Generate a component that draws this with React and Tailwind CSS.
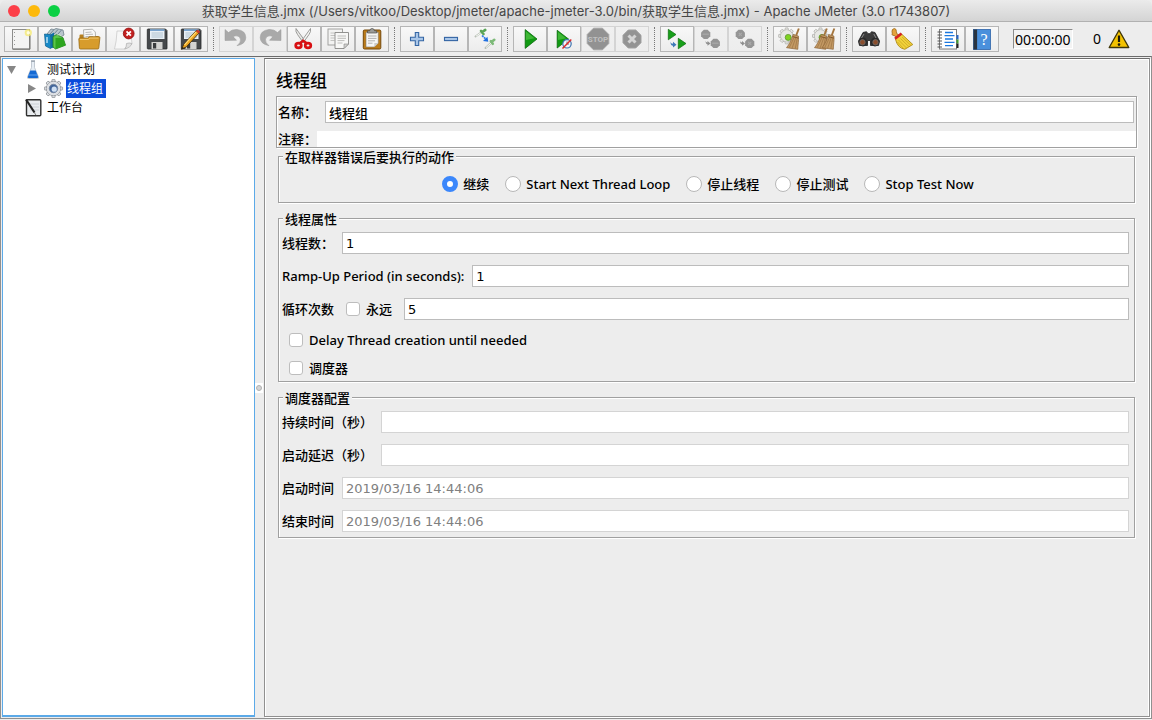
import React from "react";

const Poly = ({ cx, cy, r, fill, stroke = "none" }) => {
  const k = r * 0.414;
  const pts = [
    [cx - k, cy - r], [cx + k, cy - r], [cx + r, cy - k], [cx + r, cy + k],
    [cx + k, cy + r], [cx - k, cy + r], [cx - r, cy + k], [cx - r, cy - k],
  ];
  return <polygon points={pts.map((p) => p.join(",")).join(" ")} fill={fill} stroke={stroke} />;
};

const Floppy = () => (
  <g>
    <path d="M8 3h17.500l1.500 1.500V22.500q0 .5-.5.5H8q-.7 0-.7-.7V3.700Q7.300 3 8 3z" fill="#45484b" stroke="#26282a" strokeWidth=".8" />
    <rect x="10" y="3.400" width="14.500" height="9.600" fill="#e9f0f6" />
    <rect x="10" y="3.400" width="14.500" height="1.400" fill="#5f92c4" />
    <path d="M11.500 7h11.500M11.500 9h11.500M11.500 11h11.500" stroke="#a9bccb" strokeWidth=".9" />
    <rect x="11.500" y="16" width="11" height="7" fill="#d3d3d1" />
    <rect x="13" y="17" width="3.200" height="5.500" fill="#3a3c3e" />
  </g>
);

const Teeth = ({ cx, cy, r, fill, stroke }) => (
  <g fill={fill} stroke={stroke} strokeWidth=".8">
    {[0, 45, 90, 135, 180, 225, 270, 315].map((a) => (
      <path key={a} transform={`rotate(${a} ${cx} ${cy})`} d={`M${cx - 1.9} ${cy - r + 2.6}L${cx - 1.3} ${cy - r}h2.6L${cx + 1.9} ${cy - r + 2.6}z`} />
    ))}
    <circle cx={cx} cy={cy} r={r - 2} />
    <circle cx={cx} cy={cy} r={r - 2.4} stroke="none" />
  </g>
);

const Gear = ({ cx, cy }) => (
  <g>
    <Teeth cx={cx} cy={cy} r={8} fill="#e7e7e4" stroke="#b2b2af" />
    <circle cx={cx + 1.5} cy={cy + 1.5} r="3" fill="#7fd321" stroke="#5e9430" strokeWidth=".8" />
  </g>
);

const Broom = ({ dx = 0 }) => (
  <g transform={`translate(${dx} 0)`}>
    <path d="M25.800 2.500l-2.600 7" stroke="#a5763f" strokeWidth="1.900" />
    <path d="M20.200 8.500l5.200 1.500c.6 4.500-.6 9-.6 13.300l-11.300-1.600c2.800-3.200 5-8.200 6.700-13.200z" fill="#c49a64" stroke="#8b6336" strokeWidth=".7" />
    <path d="M21.300 11l-5 10.500M22.800 11.500l-3.700 10.700M24.300 12l-2 10.500" stroke="#946c3e" strokeWidth=".6" />
    <path d="M19.700 10.600l5.700 1.500" stroke="#7a4f22" strokeWidth=".9" />
  </g>
);

const icons = {
  fresh: (
    <g>
      <rect x="8.500" y="3.500" width="17" height="19.500" fill="#f4f4f3" stroke="#8d8d8b" />
      <path d="M9 23.200h17V9" stroke="#73736f" fill="none" />
      <path d="M10.500 6v14" stroke="#9a9a98" strokeDasharray="1 3" />
      <circle cx="24.300" cy="6.700" r="3.600" fill="#f5e96c" opacity=".75" />
      <circle cx="24.300" cy="6.700" r="1.700" fill="#fffde0" />
    </g>
  ),
  templates: (
    <g>
      <path d="M9 8l4-5 3 .5 2-1 7 1.500 1 5-8 5z" fill="#b9c5cc" stroke="#71818b" strokeWidth=".8" />
      <path d="M12 8l4-4.500M16 8l4-4.500M20 8l3.500-4" stroke="#6f8593" />
      <path d="M6.500 8l6 .6v14l-5-2.600z" fill="#1789c7" stroke="#0d5d8d" strokeWidth=".7" />
      <path d="M12.500 8.600l3.500-2v15l-3.500 1z" fill="#0f6ea6" />
      <path d="M9 11v6" stroke="#c8e7f8" strokeWidth="1.400" />
      <path d="M15 10.500l3.500-1.800 6.500 3 2.500 7.500-10 3.800-2.500-2z" fill="#5cc64b" stroke="#1f7c19" strokeWidth=".8" />
      <path d="M17.500 12l7.500-.3 2.500 7.500-10 3.800z" fill="#2da51f" />
      <path d="M19.500 9.200l2-.8 1.500 2" fill="none" stroke="#c5efbd" />
    </g>
  ),
  open: (
    <g>
      <path d="M7.500 9.500q0-1 1-1H13l1 1.500h12.500V20H7.500z" fill="#b7801f" />
      <path d="M11.500 3.800l9-.6 2.800 2.800.5 8.500H12z" fill="#f8f8f7" stroke="#a3a3a0" strokeWidth=".8" />
      <path d="M13.500 6.500l6-.5M13.500 8.500l7.500-.3M13.500 10.500h7.500" stroke="#b4b4b2" strokeWidth=".9" />
      <path d="M6.800 13q0-1 1-1h8l1.500-1.300H27q1 0 .9 1L26.800 22q-.1 1-1.100 1H8.500q-1 0-1.100-1z" fill="#d79c2c" stroke="#9b6c16" strokeWidth=".8" />
      <path d="M8 13.500h8.500l1.500-1.400h8.500" stroke="#f3cf7c" fill="none" strokeWidth=".8" />
    </g>
  ),
  close: (
    <g>
      <path d="M11 5h13.500l1.500 12.500-7 5.500H8.500q2-7 2.500-18z" fill="#f7f7f7" stroke="#cbcbcb" strokeWidth=".8" />
      <path d="M26 17.500q-3-1-5.500 0 .3 3-1.800 5.500 6-1.600 7.300-5.500z" fill="#e0e0e0" stroke="#acacac" strokeWidth=".7" />
      <circle cx="22.700" cy="7.500" r="5.400" fill="#c2201f" stroke="#8f0e0e" strokeWidth=".8" />
      <path d="M20.500 5.300l4.400 4.400M24.900 5.300l-4.400 4.400" stroke="#fff" strokeWidth="1.800" />
    </g>
  ),
  save: <Floppy />,
  saveAs: (
    <g>
      <Floppy />
      <path d="M22.300 4.500L10 18l-2.700 5.300 5.200-2.500L25 7z" fill="#eda51f" stroke="#4a320a" strokeWidth=".9" />
      <path d="M22 6L10.500 18.800" stroke="#ffdc79" strokeWidth="1.200" />
      <path d="M22.800 4.300l2.600 2.400" stroke="#cc3a28" strokeWidth="2.400" />
      <path d="M7.300 23.500l1.200-2.800 1.600 1.500z" fill="#222" />
    </g>
  ),
  undo: (
    <path d="M6 3.500l3.500 3Q13 3 18 3.500q8.800 1 8.800 8 0 6.500-8.800 8.200 4-3 3.500-6.400-.6-3.600-4.500-3.500-1.600 0-2.500 1.300l3 3.200L6 14.500z" fill="#a9a9a9" stroke="#999" strokeWidth=".5" />
  ),
  redo: (
    <path d="M28 3.500l-3.500 3Q21 3 16 3.500q-8.800 1-8.800 8 0 6.500 8.800 8.200-4-3-3.500-6.400.6-3.600 4.500-3.500 1.600 0 2.500 1.300l-3 3.200L28 14.500z" fill="#a9a9a9" stroke="#999" strokeWidth=".5" />
  ),
  cut: (
    <g>
      <path d="M9 2.500q-.8 3 1.500 6l6 8.500 1.500-2z" fill="#e8e8e6" stroke="#868684" strokeWidth=".8" />
      <path d="M23.500 2.500q.8 3-1.500 6l-6 8.500-1.500-2z" fill="#f4f4f2" stroke="#868684" strokeWidth=".8" />
      <ellipse cx="11.500" cy="19.500" rx="2.800" ry="2.400" fill="none" stroke="#d80f12" strokeWidth="2.700" />
      <ellipse cx="21" cy="19.500" rx="2.800" ry="2.400" fill="none" stroke="#d80f12" strokeWidth="2.700" />
      <path d="M13 17l3.200-2.200 3.200 2.200" fill="none" stroke="#d80f12" strokeWidth="2.400" />
    </g>
  ),
  copy: (
    <g>
      <rect x="7" y="3" width="14.500" height="16" fill="#f3f3f2" stroke="#9a9a98" strokeWidth=".9" />
      <path d="M9.500 7h9M9.500 9.500h6M9.500 12h4M9.500 14.500h4" stroke="#c4c4c2" />
      <path d="M14 6.500h13.500v11.500l-4.500 4.500h-9z" fill="#f8f8f7" stroke="#888886" strokeWidth=".9" />
      <path d="M16.500 10h8.500M16.500 12.300h8.500M16.500 14.600h7M16.500 17h5" stroke="#bcbcba" />
      <path d="M27.500 18h-4.500v4.500z" fill="#d2d2d0" stroke="#888886" strokeWidth=".6" />
    </g>
  ),
  paste: (
    <g>
      <rect x="8.300" y="4" width="17.500" height="19" rx="1.200" fill="#bd7c19" stroke="#74480a" />
      <path d="M11 6.300h12.300v10.700l-4 4H11z" fill="#f6f6f5" stroke="#83786a" strokeWidth=".6" />
      <path d="M13 10h8.500M13 12.400h8.500M13 14.800h7M13 17.200h4.500" stroke="#aaa" strokeWidth=".9" />
      <path d="M23.300 17h-4v4z" fill="#cbcbc9" />
      <path d="M12.500 7V4.800h2.200q.3-2.300 2.400-2.300t2.400 2.300h2.200V7z" fill="#9b9b98" stroke="#4e4e4c" strokeWidth=".7" />
    </g>
  ),
  plus: (
    <path d="M15.300 6.500h3.400v4.800h4.800v3.400h-4.800v4.800h-3.400v-4.800h-4.800v-3.400h4.800z" fill="#a9c6e8" stroke="#3465a4" strokeWidth="1.100" />
  ),
  minus: <rect x="10.500" y="11.400" width="13" height="3.200" fill="#a9c6e8" stroke="#3465a4" strokeWidth="1.100" />,
  toggle: (
    <g>
      <path d="M7.500 10.500l7-5" stroke="#b9c0b6" strokeWidth="2" strokeLinecap="round" />
      <path d="M8 10.200l6.500-4.500" stroke="#f6f9f5" strokeWidth="1" />
      <path d="M13 5l2.500 3M14 6.300L17.300 3.900" stroke="#5aa556" strokeWidth="2.600" strokeLinecap="round" />
      <path d="M17.500 22l6-5.500" stroke="#b9c0b6" strokeWidth="2" strokeLinecap="round" />
      <path d="M18 21.600l5.500-5" stroke="#f6f9f5" strokeWidth="1" />
      <path d="M22.800 15.200l2 2.600M23.500 16l2.800-2.200" stroke="#7dba78" strokeWidth="2.600" strokeLinecap="round" />
      <path d="M14 9.500l3.500 3.300" stroke="#2d7be8" strokeWidth="1.700" strokeDasharray="2 .7" />
      <path d="M20.300 15.700l-5.300-.6 4.400-4.400z" fill="#1f6fe0" />
    </g>
  ),
  play: (
    <g>
      <path d="M12.200 3.600L24 13 12.200 22.400z" fill="#109a12" stroke="#0a6b0c" strokeWidth=".8" />
      <path d="M13 5.500l8.500 6.800L13 14z" fill="#3fb836" />
    </g>
  ),
  playNoTimers: (
    <g>
      <path d="M10.200 4.300L21.500 13 10.200 22z" fill="#109a12" stroke="#0a6b0c" strokeWidth=".8" />
      <path d="M11 6l8 6.300-8 1.700z" fill="#3fb836" />
      <circle cx="20" cy="17.800" r="4.200" fill="#f2f5fb" stroke="#3c71ad" strokeWidth="1.200" />
      <path d="M20 15.500v2.500h2" stroke="#456" fill="none" strokeWidth=".8" />
      <path d="M15.500 22.500l8.800-9" stroke="#de2c2c" strokeWidth="1.500" />
    </g>
  ),
  stop: (
    <g>
      <Poly cx={17} cy={13} r={10.8} fill="#929292" stroke="#a4a4a4" />
      <text x="17" y="16" textAnchor="middle" fontSize="8" fontWeight="700" fontFamily="Roboto, sans-serif" fill="#c0c0c0">STOP</text>
    </g>
  ),
  shutdown: (
    <g>
      <Poly cx={17} cy={13} r={9} fill="#939393" stroke="#a1a1a1" />
      <path d="M13.500 9.500l7 7M20.500 9.500l-7 7" stroke="#d4d4d4" strokeWidth="3" />
    </g>
  ),
  remoteStart: (
    <g>
      <path d="M8.300 3.300L16 8.500l-7.700 5.300z" fill="#18a01a" stroke="#0a6b0c" strokeWidth=".7" />
      <path d="M18.300 12.300L26 17.500l-7.700 5.300z" fill="#18a01a" stroke="#0a6b0c" strokeWidth=".7" />
      <path d="M10.500 15.500q0 2.300 2.500 2.300v-2l3.500 3-3.500 2.700v-1.700q-2.500 0-2.500-4.300z" fill="#3f79b8" />
    </g>
  ),
  remoteStop: (
    <g>
      <Poly cx={11.7} cy={8.3} r={4.6} fill="#959595" />
      <Poly cx={21.3} cy={17.3} r={4.6} fill="#959595" />
      <path d="M8.500 8.300h6.400M18.100 17.300h6.400" stroke="#a5a5a5" strokeWidth="1.500" />
      <path d="M11.500 14.500q0 2 2 2v-1.500l3 2.500-3 2.300v-1.500q-2-.3-2-3.800z" fill="#8f8f8f" />
    </g>
  ),
  remoteShutdown: (
    <g>
      <Poly cx={12.3} cy={8.3} r={4.6} fill="#959595" />
      <Poly cx={21.7} cy={17.3} r={4.6} fill="#959595" />
      <path d="M10.800 6.800l3 3M13.800 6.800l-3 3M20.200 15.800l3 3M23.200 15.800l-3 3" stroke="#aaa" strokeWidth="1.100" />
      <path d="M12 14.500q0 2 2 2v-1.500l3 2.500-3 2.300v-1.500q-2-.3-2-3.800z" fill="#8f8f8f" />
    </g>
  ),
  clear: <g><Gear cx={13.7} cy={9.9} /><Broom /></g>,
  clearAll: <g><Gear cx={13.5} cy={9.9} /><Broom dx={-6} /><Broom dx={1.5} /></g>,
  search: (
    <g>
      <path d="M11 6.500l3.500-.8 1.500 2h2l1.500-2 3.500.8L27.500 15l-1 4.500h-8v-5h-3v5h-8l-1-4.500z" fill="#3b3b3b" stroke="#1f1f1f" strokeWidth=".8" />
      <circle cx="11" cy="16" r="4.400" fill="#2a2a2a" />
      <circle cx="23" cy="16" r="4.400" fill="#2a2a2a" />
      <circle cx="10.500" cy="16.300" r="2.700" fill="#8a4d2c" stroke="#6f6f6f" strokeWidth=".8" />
      <circle cx="23.500" cy="16.300" r="2.700" fill="#8a4d2c" stroke="#6f6f6f" strokeWidth=".8" />
      <path d="M12 8l-2.500 4M21.800 8l2.200 4" stroke="#8a8a8a" strokeWidth="1" />
    </g>
  ),
  searchReset: (
    <g>
      <path d="M6 5.500q-.3-2.500 2.300-3 2.200.2 2 2.800l.6 2.500 2.800 1.700-2.800 3-2-2.700-2.500-.7q-.8-1-.1-1.800z" fill="#e4a43c" stroke="#9b6617" strokeWidth=".8" />
      <path d="M15.500 8L26.800 18.500l-8 4.800Q11.500 22 9.500 13.300z" fill="#f1d23b" stroke="#ae8a14" strokeWidth=".9" />
      <path d="M12.500 14l8 8M14.500 12.500l8.500 8.300M16 11l9 8.500M11.500 16l6 6.500" stroke="#c79f1e" strokeWidth=".7" />
      <path d="M9 12.800l6.500-5.300" stroke="#d52323" strokeWidth="2.600" />
    </g>
  ),
  functions: (
    <g>
      <rect x="8.500" y="3.500" width="17" height="19.500" fill="#fff" stroke="#7c7c7c" />
      <rect x="25.500" y="9" width="2" height="4.500" fill="#2565c7" />
      <rect x="25.500" y="13.500" width="2" height="4" fill="#43a02c" />
      <rect x="25.500" y="17.500" width="2" height="4.500" fill="#222" />
      <path d="M14 6.500h8M13.500 9.700h10M14 13h8M13.500 16.300h10M14 19.700h8" stroke="#1c79e0" strokeWidth="1.300" />
      <path d="M6.500 6h4.500M6.500 9h4.500M6.500 12h4.500M6.500 15h4.500M6.500 18h4.500M6.500 21h4.500" stroke="#555" strokeWidth="1" />
    </g>
  ),
  help: (
    <g>
      <rect x="8.500" y="3.500" width="17" height="20" fill="#4a90dc" stroke="#2f64a8" strokeWidth=".8" />
      <rect x="8.500" y="3.500" width="3.600" height="20" fill="#2a3440" />
      <text x="19" y="19" textAnchor="middle" fontSize="16" fontFamily="'Liberation Serif', serif" fill="#fff">?</text>
    </g>
  ),
};

const groups = [
  [["fresh", "New"], ["templates", "Templates"], ["open", "Open"], ["close", "Close"], ["save", "Save"], ["saveAs", "Save as"]],
  [["undo", "Undo", true], ["redo", "Redo", true], ["cut", "Cut"], ["copy", "Copy"], ["paste", "Paste"]],
  [["plus", "Expand All"], ["minus", "Collapse All"], ["toggle", "Toggle"]],
  [["play", "Start"], ["playNoTimers", "Start no pauses"], ["stop", "Stop", true], ["shutdown", "Shutdown", true]],
  [["remoteStart", "Remote Start All"], ["remoteStop", "Remote Stop All", true], ["remoteShutdown", "Remote Shutdown All", true]],
  [["clear", "Clear"], ["clearAll", "Clear All"]],
  [["search", "Search"], ["searchReset", "Reset Search"]],
  [["functions", "Function Helper"], ["help", "Help"]],
];

function Toolbar() {
  return (
    <div role="toolbar" className="flex h-[34px] shrink-0 items-center pl-1">
      {groups.map((group, i) => (
        <React.Fragment key={i}>
          {i > 0 && <div className="mr-[5px] ml-[5px] h-6 border-l border-dotted border-[#777]" />}
          <div className="flex">
            {group.map(([name, label, disabled]) => (
              <button
                key={name}
                type="button"
                aria-label={label}
                disabled={disabled}
                className="h-[26px] w-[34px] border border-[#b6b6b6] bg-linear-to-b from-[#f8f8f8] to-[#ececec] disabled:border-[#d4d4d4] disabled:from-[#f0f0f0] disabled:to-[#ededed]"
              >
                <svg viewBox="1 1 32 24" className="block h-6 w-8" fill="none">{icons[name]}</svg>
              </button>
            ))}
          </div>
        </React.Fragment>
      ))}
      <input
        aria-label="Elapsed time"
        readOnly
        defaultValue="00:00:00"
        className="ml-[14px] h-5 w-[60px] border border-t-[#8c8c8c] border-r-white border-b-white border-l-[#8c8c8c] bg-[#f3f3f3] px-px text-sm leading-[18px]"
      />
      <span className="ml-5 text-sm">0</span>
      <svg viewBox="0 0 22 20" className="ml-[7px] h-5 w-[22px]">
        <path d="M11 1.200L20.800 18.500H1.200z" fill="#f3c200" stroke="#3f3608" strokeWidth="1.300" strokeLinejoin="round" />
        <path d="M11 6.500v6.500" stroke="#1d1a08" strokeWidth="2.200" />
        <circle cx="11" cy="15.600" r="1.300" fill="#1d1a08" />
      </svg>
    </div>
  );
}

const Flask = () => (
  <svg viewBox="0 0 20 19" className="h-[19px] w-5 shrink-0">
    <path d="M7.500 1.500h3v6l4 9.500q.5 1.500-1 1.500h-9q-1.500 0-1-1.500l4-9.500z" fill="#e6edf4" stroke="#b4bdc7" strokeWidth=".8" />
    <path d="M6.300 10.500h5.400l2.400 6.300q.3 1.200-.9 1.200H4.800q-1.200 0-.9-1.200z" fill="#1469d2" />
    <path d="M5 15l8 0" stroke="#5fa2f2" />
    <path d="M7 1h4" stroke="#8793a0" strokeWidth="1.200" />
  </svg>
);

const Cog = () => (
  <svg viewBox="0 0 20 19" className="h-[19px] w-5 shrink-0">
    <Teeth cx={9.5} cy={9.5} r={9.1} fill="#dde0e4" stroke="#8f9398" />
    <circle cx="9.500" cy="9.500" r="4.200" fill="#41659a" stroke="#7487a2" />
    <circle cx="10.200" cy="10.200" r="2.600" fill="#cfe0f3" />
  </svg>
);

const Bench = () => (
  <svg viewBox="0 0 20 19" className="h-[19px] w-5 shrink-0">
    <rect x="2.500" y="1.800" width="14.300" height="16" rx="1" fill="#e9ecef" stroke="#303030" strokeWidth="1.400" />
    <path d="M6 6h9M6 9h9M6 12h9" stroke="#c4cbd2" strokeWidth=".8" />
    <path d="M2 1.500l8.500 13" stroke="#222" strokeWidth="2.200" />
    <path d="M10 14l2 3.200" stroke="#777" />
  </svg>
);

function TreePane() {
  return (
    <nav className="w-[253px] shrink-0 border border-b-2 border-[#5caae8] bg-white pt-px text-xs">
      <ul>
        <li>
          <div className="flex h-[19px] items-center">
            <button type="button" aria-label="Collapse" className="flex w-[21px] shrink-0 pl-1">
              <svg viewBox="0 0 9 8" className="h-2 w-[9px]"><path d="M0 0h9L4.500 8z" fill="#878787" /></svg>
            </button>
            <Flask />
            <a href="#plan" className="ml-[3px]">测试计划</a>
          </div>
          <ul className="pl-5">
            <li className="flex h-[19px] items-center">
              <button type="button" aria-label="Expand" className="flex w-[21px] shrink-0 pl-[5px]">
                <svg viewBox="0 0 8 9" className="h-[9px] w-2"><path d="M0 0v9l8-4.500z" fill="#878787" /></svg>
              </button>
              <Cog />
              <a href="#group" className="ml-[2px] bg-[#0a4bdb] pr-[3px] pl-px leading-[19px] text-white">线程组</a>
            </li>
          </ul>
        </li>
        <li className="flex h-[19px] items-center pl-[21px]">
          <Bench />
          <a href="#bench" className="ml-[3px]">工作台</a>
        </li>
      </ul>
    </nav>
  );
}

const etched = "border border-[#a0a0a0] shadow-[1px_1px_0_#fff,inset_1px_1px_0_#fff]";

function Group({ title, className, children }) {
  return (
    <fieldset className={`mx-[2px] ${etched} ${className}`}>
      <legend className="ml-1 h-[13px] bg-[#ededed] px-[2px] leading-[15px]">{title}</legend>
      {children}
    </fieldset>
  );
}

const box = "h-[22px] min-w-0 flex-1 border border-[#bcbcbc] bg-white px-[3px] disabled:border-[#d4d4d4] disabled:text-[#808080]";
const digits = "font-[DejaVu_Sans,sans-serif]";

function Field({ id, label, value = "", disabled }) {
  return (
    <div className="flex items-center gap-2">
      <label htmlFor={id} className="whitespace-nowrap">{label}</label>
      <input id={id} defaultValue={value} disabled={disabled} className={`${box} ${digits}`} />
    </div>
  );
}

function Check({ label }) {
  return (
    <label className="flex items-center gap-[6px] whitespace-nowrap">
      <input type="checkbox" className="size-[14px] appearance-none rounded-[3px] border border-[#bdbdbd] bg-white checked:bg-[#3b87fb]" />
      {label}
    </label>
  );
}

const actions = ["继续", "Start Next Thread Loop", "停止线程", "停止测试", "Stop Test Now"];

function ThreadGroup() {
  return (
    <main className="min-w-0 flex-1 border border-[#909090] border-t-[#6c6c6c] pr-3 pl-[11px] font-medium shadow-[1px_1px_0_#fff,inset_1px_1px_0_#fff,inset_-1px_0_0_#fff]">
      <h1 className="pt-[10px] pb-[3px] text-[17px] leading-6">线程组</h1>
      <div className={`${etched} pt-1`}>
        <div className="flex items-center gap-2 pr-[2px] pl-px">
          <label htmlFor="name">名称：</label>
          <input id="name" defaultValue="线程组" className={box} />
        </div>
        <div className="mt-2 flex h-4 items-center pl-px">
          <label htmlFor="comment">注释：</label>
          <input id="comment" className="h-4 min-w-0 flex-1 bg-white" />
        </div>
      </div>

      <Group title="在取样器错误后要执行的动作" className="mt-[2px]">
        <div className="flex h-[39px] items-center justify-center gap-4 pt-[3px] pl-[3px]">
          {actions.map((action, i) => (
            <label key={action} className="flex items-center gap-[5px] whitespace-nowrap">
              <input
                type="radio"
                name="action"
                defaultChecked={i === 0}
                className="size-4 appearance-none rounded-full border border-[#b8b8b8] bg-white checked:border-[5px] checked:border-[#3b87fb]"
              />
              {action}
            </label>
          ))}
        </div>
      </Group>

      <Group title="线程属性" className="mt-[9px]">
        <div className="flex flex-col gap-[11px] pt-[7px] pr-[5px] pl-[3px]">
          <Field id="threads" label="线程数：" value="1" />
          <Field id="ramp" label="Ramp-Up Period (in seconds):" value="1" />
          <div className="flex items-center gap-3">
            <label htmlFor="loops">循环次数</label>
            <Check label="永远" />
            <input id="loops" defaultValue="5" className={`${box} ${digits}`} />
          </div>
        </div>
        <div className="flex flex-col gap-2 pt-[10px] pb-[3px] pl-[10px] leading-5">
          <Check label="Delay Thread creation until needed" />
          <Check label="调度器" />
        </div>
      </Group>

      <Group title="调度器配置" className="mt-[9px]">
        <div className="flex flex-col gap-[11px] pt-[7px] pr-[5px] pb-[5px] pl-[3px]">
          <Field id="duration" label="持续时间（秒）" disabled />
          <Field id="delay" label="启动延迟（秒）" disabled />
          <Field id="start" label="启动时间" value="2019/03/16 14:44:06" disabled />
          <Field id="end" label="结束时间" value="2019/03/16 14:44:06" disabled />
        </div>
      </Group>
    </main>
  );
}

export default function App() {
  return (
    <div lang="zh-CN" className="flex h-screen flex-col bg-[#ededed] font-[Noto_Sans,Noto_Sans_CJK_SC,sans-serif] text-[13px] leading-4 text-black">
      <header className="relative flex h-[22px] shrink-0 items-center justify-center rounded-t-md border-b border-[#b1b1b1] bg-linear-to-b from-[#ebebeb] to-[#d4d4d4] font-[Inter,Noto_Sans_CJK_SC,sans-serif] text-[#464646]">
        <div className="absolute left-2 flex gap-2">
          <button type="button" aria-label="Close window" className="size-3 rounded-full bg-[#fc3f48]" />
          <button type="button" aria-label="Minimize window" className="size-3 rounded-full bg-[#fdb90b]" />
          <button type="button" aria-label="Zoom window" className="size-3 rounded-full bg-[#0bd044]" />
        </div>
        <span className="whitespace-nowrap">获取学生信息.jmx (/Users/vitkoo/Desktop/jmeter/apache-jmeter-3.0/bin/获取学生信息.jmx) - Apache JMeter (3.0 r1743807)</span>
      </header>
      <Toolbar />
      <div className="mb-px flex min-h-0 flex-1 border border-[#909090] border-t-[#6c6c6c] p-px">
        <TreePane />
        <div role="separator" className="flex w-[9px] shrink-0 items-center">
          <span className="flex h-[10px] w-2 items-center justify-center bg-white">
            <span className="size-[6px] rounded-full border border-[#b0b0b0] bg-[#d5d5d5]" />
          </span>
        </div>
        <ThreadGroup />
      </div>
    </div>
  );
}
